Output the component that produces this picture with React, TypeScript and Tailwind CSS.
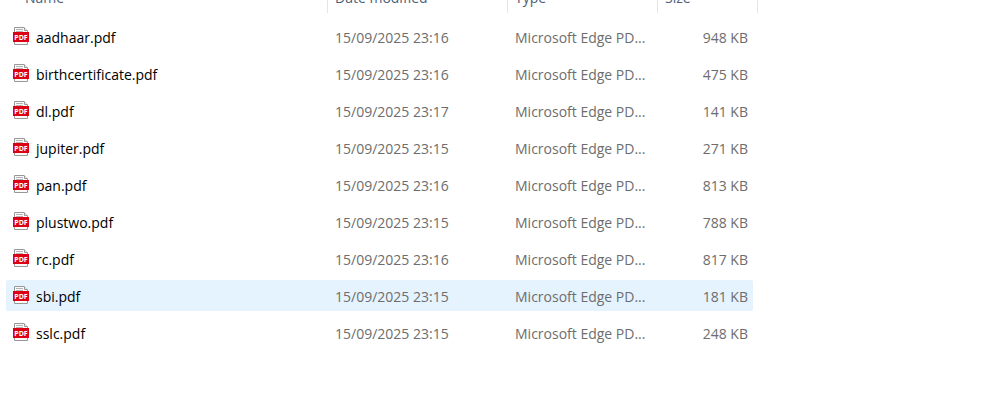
type FileEntry = { name: string; modified: string; size: string; hovered?: boolean };

const files: FileEntry[] = [
  { name: "aadhaar.pdf", modified: "15/09/2025 23:16", size: "948 KB" },
  { name: "birthcertificate.pdf", modified: "15/09/2025 23:16", size: "475 KB" },
  { name: "dl.pdf", modified: "15/09/2025 23:17", size: "141 KB" },
  { name: "jupiter.pdf", modified: "15/09/2025 23:15", size: "271 KB" },
  { name: "pan.pdf", modified: "15/09/2025 23:16", size: "813 KB" },
  { name: "plustwo.pdf", modified: "15/09/2025 23:15", size: "788 KB" },
  { name: "rc.pdf", modified: "15/09/2025 23:16", size: "817 KB" },
  { name: "sbi.pdf", modified: "15/09/2025 23:15", size: "181 KB", hovered: true },
  { name: "sslc.pdf", modified: "15/09/2025 23:15", size: "248 KB" },
];

function PdfIcon() {
  return (
    <svg viewBox="0 0 16 18" className="mb-0.5 h-[18px] w-4 shrink-0" aria-hidden="true">
      <path d="M1.5 0.5H11L14.5 4V17.5H1.5Z" fill="#fafafa" stroke="#989898" />
      <path d="M11.5 0.5V3.5H14.5" fill="#e4e4e4" stroke="#989898" />
      <path d="M3 2.5H10M3 4.5H10" stroke="#b4b4b4" fill="none" />
      <rect x="0" y="5" width="16" height="10" fill="#dc0014" />
      <text
        x="8"
        y="13"
        textAnchor="middle"
        fontFamily="'Open Sans', sans-serif"
        fontWeight="700"
        fontSize="7"
        fill="#fff"
      >
        PDF
      </text>
    </svg>
  );
}

export default function App() {
  return (
    <main className="min-h-screen overflow-x-hidden bg-white font-['Open_Sans',sans-serif] text-sm leading-5">
      <table className="block">
        <thead className="block">
          <tr className="grid grid-cols-[328px_180px_150px_100px] grid-rows-[13px] overflow-hidden text-left text-[#4c607a]">
            <th className="flex items-end border-r border-[#e5e5e5] pb-[5px] pl-[25px] font-normal">Name</th>
            <th className="flex items-end border-r border-[#e5e5e5] pb-[5px] pl-[7px] font-normal">Date modified</th>
            <th className="flex items-end border-r border-[#e5e5e5] pb-[5px] pl-[7px] font-normal">Type</th>
            <th className="flex items-end border-r border-[#e5e5e5] pb-[5px] pl-[7px] font-normal">Size</th>
          </tr>
        </thead>
        <tbody className="flex flex-col items-start gap-1.5 pt-2 pl-1.5">
          {files.map((file) => (
            <tr
              key={file.name}
              className={`grid h-[31px] grid-cols-[322px_180px_150px_95px] items-center rounded-xs text-[#6d6d6d] ${
                file.hovered ? "bg-[#e5f3ff]" : ""
              }`}
            >
              <td className="flex items-center gap-[7px] pl-[7px] text-black">
                <PdfIcon />
                <span className="pt-0.5">{file.name}</span>
              </td>
              <td className="pt-0.5 pl-[7px]">{file.modified}</td>
              <td className="pt-0.5 pl-[7px] whitespace-nowrap">Microsoft Edge PD...</td>
              <td className="pt-0.5 pr-[5px] text-right">{file.size}</td>
            </tr>
          ))}
        </tbody>
      </table>
    </main>
  );
}
